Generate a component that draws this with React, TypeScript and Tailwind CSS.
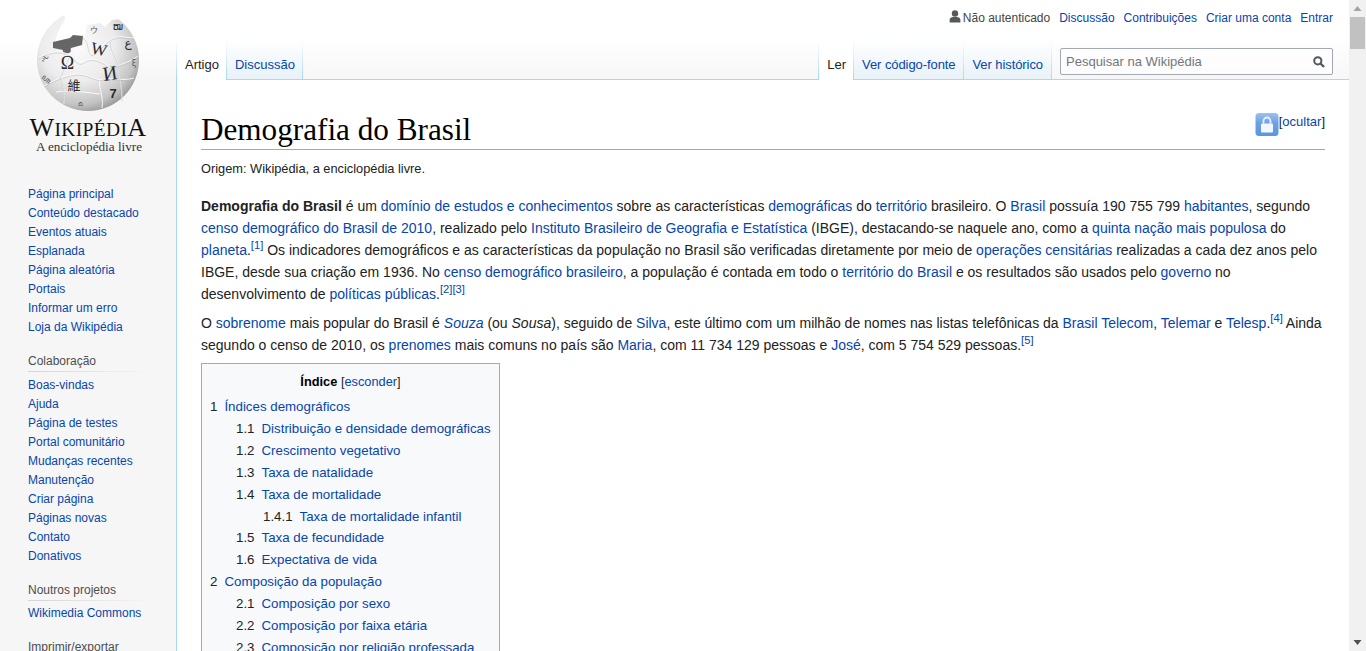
const mainNav = [
  'Página principal',
  'Conteúdo destacado',
  'Eventos atuais',
  'Esplanada',
  'Página aleatória',
  'Portais',
  'Informar um erro',
  'Loja da Wikipédia',
]

const collabNav = [
  'Boas-vindas',
  'Ajuda',
  'Página de testes',
  'Portal comunitário',
  'Mudanças recentes',
  'Manutenção',
  'Criar página',
  'Páginas novas',
  'Contato',
  'Donativos',
]

const toc = [
  { n: '1', t: 'Índices demográficos', l: 1 },
  { n: '1.1', t: 'Distribuição e densidade demográficas', l: 2 },
  { n: '1.2', t: 'Crescimento vegetativo', l: 2 },
  { n: '1.3', t: 'Taxa de natalidade', l: 2 },
  { n: '1.4', t: 'Taxa de mortalidade', l: 2 },
  { n: '1.4.1', t: 'Taxa de mortalidade infantil', l: 3 },
  { n: '1.5', t: 'Taxa de fecundidade', l: 2 },
  { n: '1.6', t: 'Expectativa de vida', l: 2 },
  { n: '2', t: 'Composição da população', l: 1 },
  { n: '2.1', t: 'Composição por sexo', l: 2 },
  { n: '2.2', t: 'Composição por faixa etária', l: 2 },
  { n: '2.3', t: 'Composição por religião professada', l: 2 },
]

function Globe() {
  return (
    <svg viewBox="30 10 120 105" width="120" height="105" className="block">
      <defs>
        <radialGradient id="sphere" cx="40%" cy="36%" r="72%">
          <stop offset="0%" stopColor="#fbfbfb" />
          <stop offset="50%" stopColor="#ececec" />
          <stop offset="80%" stopColor="#c4c4c4" />
          <stop offset="100%" stopColor="#858585" />
        </radialGradient>
      </defs>
      <circle cx="88" cy="60" r="51" fill="url(#sphere)" />
      {/* missing pieces at the top */}
      <path
        d="M30 4 L62 4 L65 19 C61 26 57 33 55 42 L70 38 L73 35 L85 37 L87 25 L100 23 L105 27 L112 20 L120 19 L150 4 Z"
        fill="#fff"
      />
      <path
        d="M53 42 L70 38 L73 35 L83 36 L82 45 L71 48 C70 50 72 52 69 53 C65 54 62 52 63 50 L53 48 Z"
        fill="#666"
      />
      <g fill="none" stroke="#fff" strokeWidth="1" opacity="0.9">
        <path d="M38 58 C50 51 60 50 70 55 C76 60 78 66 84 62 C92 56 104 62 110 68 C118 66 130 62 138 56" />
        <path d="M44 86 C54 80 64 76 76 74 C86 74 92 78 100 80 C110 76 122 82 134 78" />
        <path d="M83 37 C90 42 86 50 92 55 C98 52 104 44 110 40 C118 34 124 38 134 38" />
        <path d="M70 55 C66 62 64 70 60 76 C62 84 66 92 64 104" />
        <path d="M100 80 C98 88 104 96 102 108" />
        <path d="M110 40 C110 50 116 56 118 64 C116 72 122 80 122 100" />
        <path d="M56 92 C68 90 84 92 100 94" />
        <path d="M78 52 C74 58 78 62 84 62" />
      </g>
      <g fill="none" stroke="#b5b5b5" strokeWidth="0.5">
        <path d="M38 59 C50 52 60 51 70 56 C76 61 78 67 84 63 C92 57 104 63 110 69 C118 67 130 63 138 57" />
        <path d="M44 87 C54 81 64 77 76 75 C86 75 92 79 100 81 C110 77 122 83 134 79" />
        <path d="M70 56 C66 63 64 71 60 77 C62 85 66 93 64 105" />
        <path d="M110 41 C110 51 116 57 118 65 C116 73 122 81 122 101" />
        <path d="M83 38 C90 43 86 51 92 56 C98 53 104 45 110 41 C118 35 124 39 134 39" />
      </g>
      <g fill="#2a2a2a" textAnchor="middle">
        <text x="67.5" y="69" fontSize="18" fontFamily="'Liberation Serif', serif">Ω</text>
        <text x="99" y="55" fontSize="17" fontFamily="'Liberation Serif', serif" transform="rotate(12 99 49)">W</text>
        <text x="110" y="80" fontSize="20" fontFamily="'Liberation Serif', serif" transform="rotate(-8 110 73)">И</text>
        <text x="74" y="90" fontSize="13" fontFamily="'Noto Sans CJK TC', sans-serif">維</text>
        <text x="113" y="98" fontSize="13" fontWeight="700" fontFamily="'Liberation Sans', sans-serif">7</text>
        <text x="128" y="47" fontSize="12" fontFamily="'DejaVu Sans', sans-serif">ع</text>
        <text x="118" y="30" fontSize="10" fontFamily="'DejaVu Sans', sans-serif">ໝ</text>
      </g>
      <g fill="#555" textAnchor="middle">
        <text x="94" y="33" fontSize="8" fontFamily="'Noto Sans CJK JP', sans-serif">ウ</text>
        <text x="43" y="62" fontSize="8" fontFamily="'DejaVu Sans', sans-serif" transform="rotate(-70 43 58)">ሢ</text>
        <text x="47" y="82" fontSize="8" fontFamily="'DejaVu Sans', sans-serif" transform="rotate(40 47 79)">ꦲ</text>
        <text x="134" y="66" fontSize="8" fontFamily="'DejaVu Sans', sans-serif">ξ</text>
        <text x="80" y="106" fontSize="8" fontFamily="'DejaVu Sans', sans-serif">ಎ</text>
      </g>
    </svg>
  )
}

function LockBadge() {
  return (
    <svg viewBox="0 0 24 24" width="24" height="25" className="block shrink-0 ml-px">
      <defs>
        <linearGradient id="lock" x1="0" y1="0" x2="0" y2="1">
          <stop offset="0%" stopColor="#9cc2ee" />
          <stop offset="45%" stopColor="#6b9fe4" />
          <stop offset="100%" stopColor="#5b97db" />
        </linearGradient>
      </defs>
      <rect x="0.5" y="0.5" width="23" height="23" rx="3.5" fill="url(#lock)" />
      <path d="M8.5 11 V8.5 a3.5 3.5 0 0 1 7 0 V11" fill="none" stroke="#e8f0fb" strokeWidth="1.8" />
      <rect x="6" y="11" width="12" height="9" rx="1" fill="#f2f6fd" />
    </svg>
  )
}

function Sep() {
  return <div className="w-px h-full bg-gradient-to-b from-white to-[#a7d7f9] shrink-0" />
}

function Tab({ label, active, wide, tight }: { label: string; active?: boolean; wide?: boolean; tight?: boolean }) {
  const pad = wide ? 'pl-[9px] pr-[8px]' : 'pl-[8px] pr-[7px]'
  const track = tight ? 'tracking-[-0.08px]' : ''
  return (
    <div
      className={
        active
          ? `h-10 -mb-px ${pad} pt-[16px] bg-white text-[#222] leading-[18px]`
          : `h-10 -mb-px ${pad} ${track} pt-[16px] bg-gradient-to-b from-white to-[#e8f2f8] border-b border-[#a7d7f9] text-[#0645ad] leading-[18px]`
      }
    >
      {label}
    </div>
  )
}

function A({ children }: { children: React.ReactNode }) {
  return <span className="text-[#0645ad]">{children}</span>
}

function Ref({ n }: { n: number }) {
  return <sup className="text-[#0645ad] text-[11.2px]">[{n}]</sup>
}

export default function App() {
  return (
    <div className="flex h-[651px] overflow-hidden font-['Liberation_Sans',Arial,sans-serif] text-[#222]">
      <div className="flex flex-1 min-w-0 bg-[#f6f6f6] bg-[linear-gradient(#fff_50%,#f6f6f6_100%)] bg-[length:100%_80px] bg-no-repeat">
        <aside className="w-[176px] shrink-0">
          <div className="h-[185px] pl-[29px] pt-[10px]">
            <div className="ml-px">
              <Globe />
            </div>
            <div className="w-[118px] text-center font-['Liberation_Serif',serif] text-[#111] leading-none whitespace-nowrap">
              <div className="text-[19.5px] leading-[26px] tracking-[0.35px]">
                <span className="text-[26px]">W</span>IKIPÉDI<span className="text-[26px]">A</span>
              </div>
              <div className="-mt-[4px] pl-[2px] text-[13.2px] leading-[15px] text-[#333]">A enciclopédia livre</div>
            </div>
          </div>
          <nav className="pl-[28px] text-[12px] leading-[19px] text-[#0645ad]">
            {mainNav.map((x) => (
              <div key={x}>{x}</div>
            ))}
            <h3 className="mt-[15px] text-[#4d4d4d] leading-[19px] font-normal">Colaboração</h3>
            <div className="h-px w-[125px] mb-[4px] bg-gradient-to-r from-[#d4d4d4] to-[#f6f6f6]" />
            {collabNav.map((x) => (
              <div key={x}>{x}</div>
            ))}
            <h3 className="mt-[15px] text-[#4d4d4d] leading-[19px] font-normal">Noutros projetos</h3>
            <div className="h-px w-[125px] mb-[3px] bg-gradient-to-r from-[#d4d4d4] to-[#f6f6f6]" />
            <div>Wikimedia Commons</div>
            <h3 className="mt-[15px] text-[#4d4d4d] leading-[19px] font-normal">Imprimir/exportar</h3>
          </nav>
        </aside>

        <div className="flex-1 min-w-0 flex flex-col">
          <div className="h-10 flex justify-end items-start gap-[9px] pt-[9px] pr-[16px] text-[12px] leading-[18px] text-[#0645ad]">
            <div className="flex items-center text-[#444]">
              <svg viewBox="0 0 12 13" width="12" height="13" className="mr-[2px] -mt-[3px]">
                <circle cx="6" cy="3.4" r="3.2" fill="#54595d" />
                <path d="M0.6 12.6 V10 C0.6 7.6 3 6.8 6 6.8 C9 6.8 11.4 7.6 11.4 10 V12.6 Z" fill="#54595d" />
              </svg>
              Não autenticado
            </div>
            <span>Discussão</span>
            <span>Contribuições</span>
            <span>Criar uma conta</span>
            <span>Entrar</span>
          </div>

          <div className="h-10 flex text-[13px] border-b border-[#a7d7f9]">
            <Sep />
            <Tab label="Artigo" active />
            <Sep />
            <Tab label="Discussão" />
            <Sep />
            <div className="flex-1" />
            <Sep />
            <Tab label="Ler" active />
            <Sep />
            <Tab label="Ver código-fonte" tight />
            <Sep />
            <Tab label="Ver histórico" wide tight />
            <Sep />
            <div className="ml-[8px] mr-[16px] mt-[8px] w-[273px] h-[27px] flex items-center justify-between rounded-[2px] border border-[#a2a9b1] bg-white/60 pl-[5px] pr-[7px] text-[#72777d]">
              <span className="text-[13px]">Pesquisar na Wikipédia</span>
              <svg viewBox="0 0 13 13" width="12" height="12">
                <circle cx="5.2" cy="5.2" r="3.9" fill="none" stroke="#54595d" strokeWidth="2.2" />
                <path d="M8 8 L12 12" stroke="#54595d" strokeWidth="2.4" />
              </svg>
            </div>
          </div>

          <main className="flex-1 min-h-0 bg-white border-l border-[#a7d7f9] pl-[24px] pr-[24px] pt-[32px] text-[14px]">
            <div className="flex justify-between items-start h-[38px] border-b border-[#a2a9b1]">
              <h1 className="font-['Liberation_Serif',serif] text-[31.2px] leading-[35px] text-black">Demografia do Brasil</h1>
              <div className="flex items-start text-[13px] leading-[20px] text-[#0645ad]">
                <LockBadge />
                <span>
                  <span className="text-[#222]">[</span>ocultar<span className="text-[#222]">]</span>
                </span>
              </div>
            </div>
            <div className="mt-[9px] text-[12.8px] leading-[19px] text-[#222]">Origem: Wikipédia, a enciclopédia livre.</div>
            <p className="mt-[17px] leading-[22px]">
              <b>Demografia do Brasil</b> é um <A>domínio de estudos e conhecimentos</A> sobre as características <A>demográficas</A> do <A>território</A> brasileiro. O <A>Brasil</A> possuía 190 755 799 <A>habitantes</A>, segundo <A>censo demográfico do Brasil de 2010</A>, realizado pelo <A>Instituto Brasileiro de Geografia e Estatística</A> (IBGE), destacando-se naquele ano, como a <A>quinta nação mais populosa</A> do <A>planeta</A>.<Ref n={1} /> Os indicadores demográficos e as características da população no Brasil são verificadas diretamente por meio de <A>operações censitárias</A> realizadas a cada dez anos pelo IBGE, desde sua criação em 1936. No <A>censo demográfico brasileiro</A>, a população é contada em todo o <A>território do Brasil</A> e os resultados são usados pelo <A>governo</A> no desenvolvimento de <A>políticas públicas</A>.<Ref n={2} /><Ref n={3} />
            </p>
            <p className="mt-[7px] leading-[22px]">
              O <A>sobrenome</A> mais popular do Brasil é <i><A>Souza</A></i> (ou <i>Sousa</i>), seguido de <A>Silva</A>, este último com um milhão de nomes nas listas telefônicas da <A>Brasil Telecom</A>, <A>Telemar</A> e <A>Telesp</A>.<Ref n={4} /> Ainda segundo o censo de 2010, os <A>prenomes</A> mais comuns no país são <A>Maria</A>, com 11 734 129 pessoas e <A>José</A>, com 5 754 529 pessoas.<Ref n={5} />
            </p>
            <div className="mt-[7px] w-[299px] border border-[#a2a9b1] bg-[#f8f9fa] pl-[8px] pt-[8px] pb-[7px]">
              <div className="text-center text-[12.8px] leading-[20px] mb-[4px] pr-[8px]">
                <b className="text-[#000]">Índice</b> <span className="text-[#222]">[</span><A>esconder</A><span className="text-[#222]">]</span>
              </div>
              {toc.map((r) => (
                <div
                  key={r.n}
                  className={
                    r.l === 1
                      ? 'leading-[21.9px] whitespace-nowrap text-[13.3px]'
                      : r.l === 2
                        ? 'leading-[21.9px] whitespace-nowrap text-[13.3px] pl-[26px]'
                        : 'leading-[21.9px] whitespace-nowrap text-[13.3px] pl-[53px]'
                  }
                >
                  <span className="mr-[7px]">{r.n}</span>
                  <A>{r.t}</A>
                </div>
              ))}
            </div>
          </main>
        </div>
      </div>

      <div className="w-[17px] shrink-0 bg-[#f1f1f1] flex flex-col items-center">
        <svg viewBox="0 0 17 17" width="17" height="17" className="shrink-0">
          <path d="M8.5 6 L12.5 11 H4.5 Z" fill="#a3a3a3" />
        </svg>
        <div className="w-[15px] h-[32px] bg-[#c1c1c1]" />
        <div className="flex-1" />
        <svg viewBox="0 0 17 17" width="17" height="17" className="shrink-0">
          <path d="M8.5 11 L12.5 6 H4.5 Z" fill="#505050" />
        </svg>
      </div>
    </div>
  )
}
